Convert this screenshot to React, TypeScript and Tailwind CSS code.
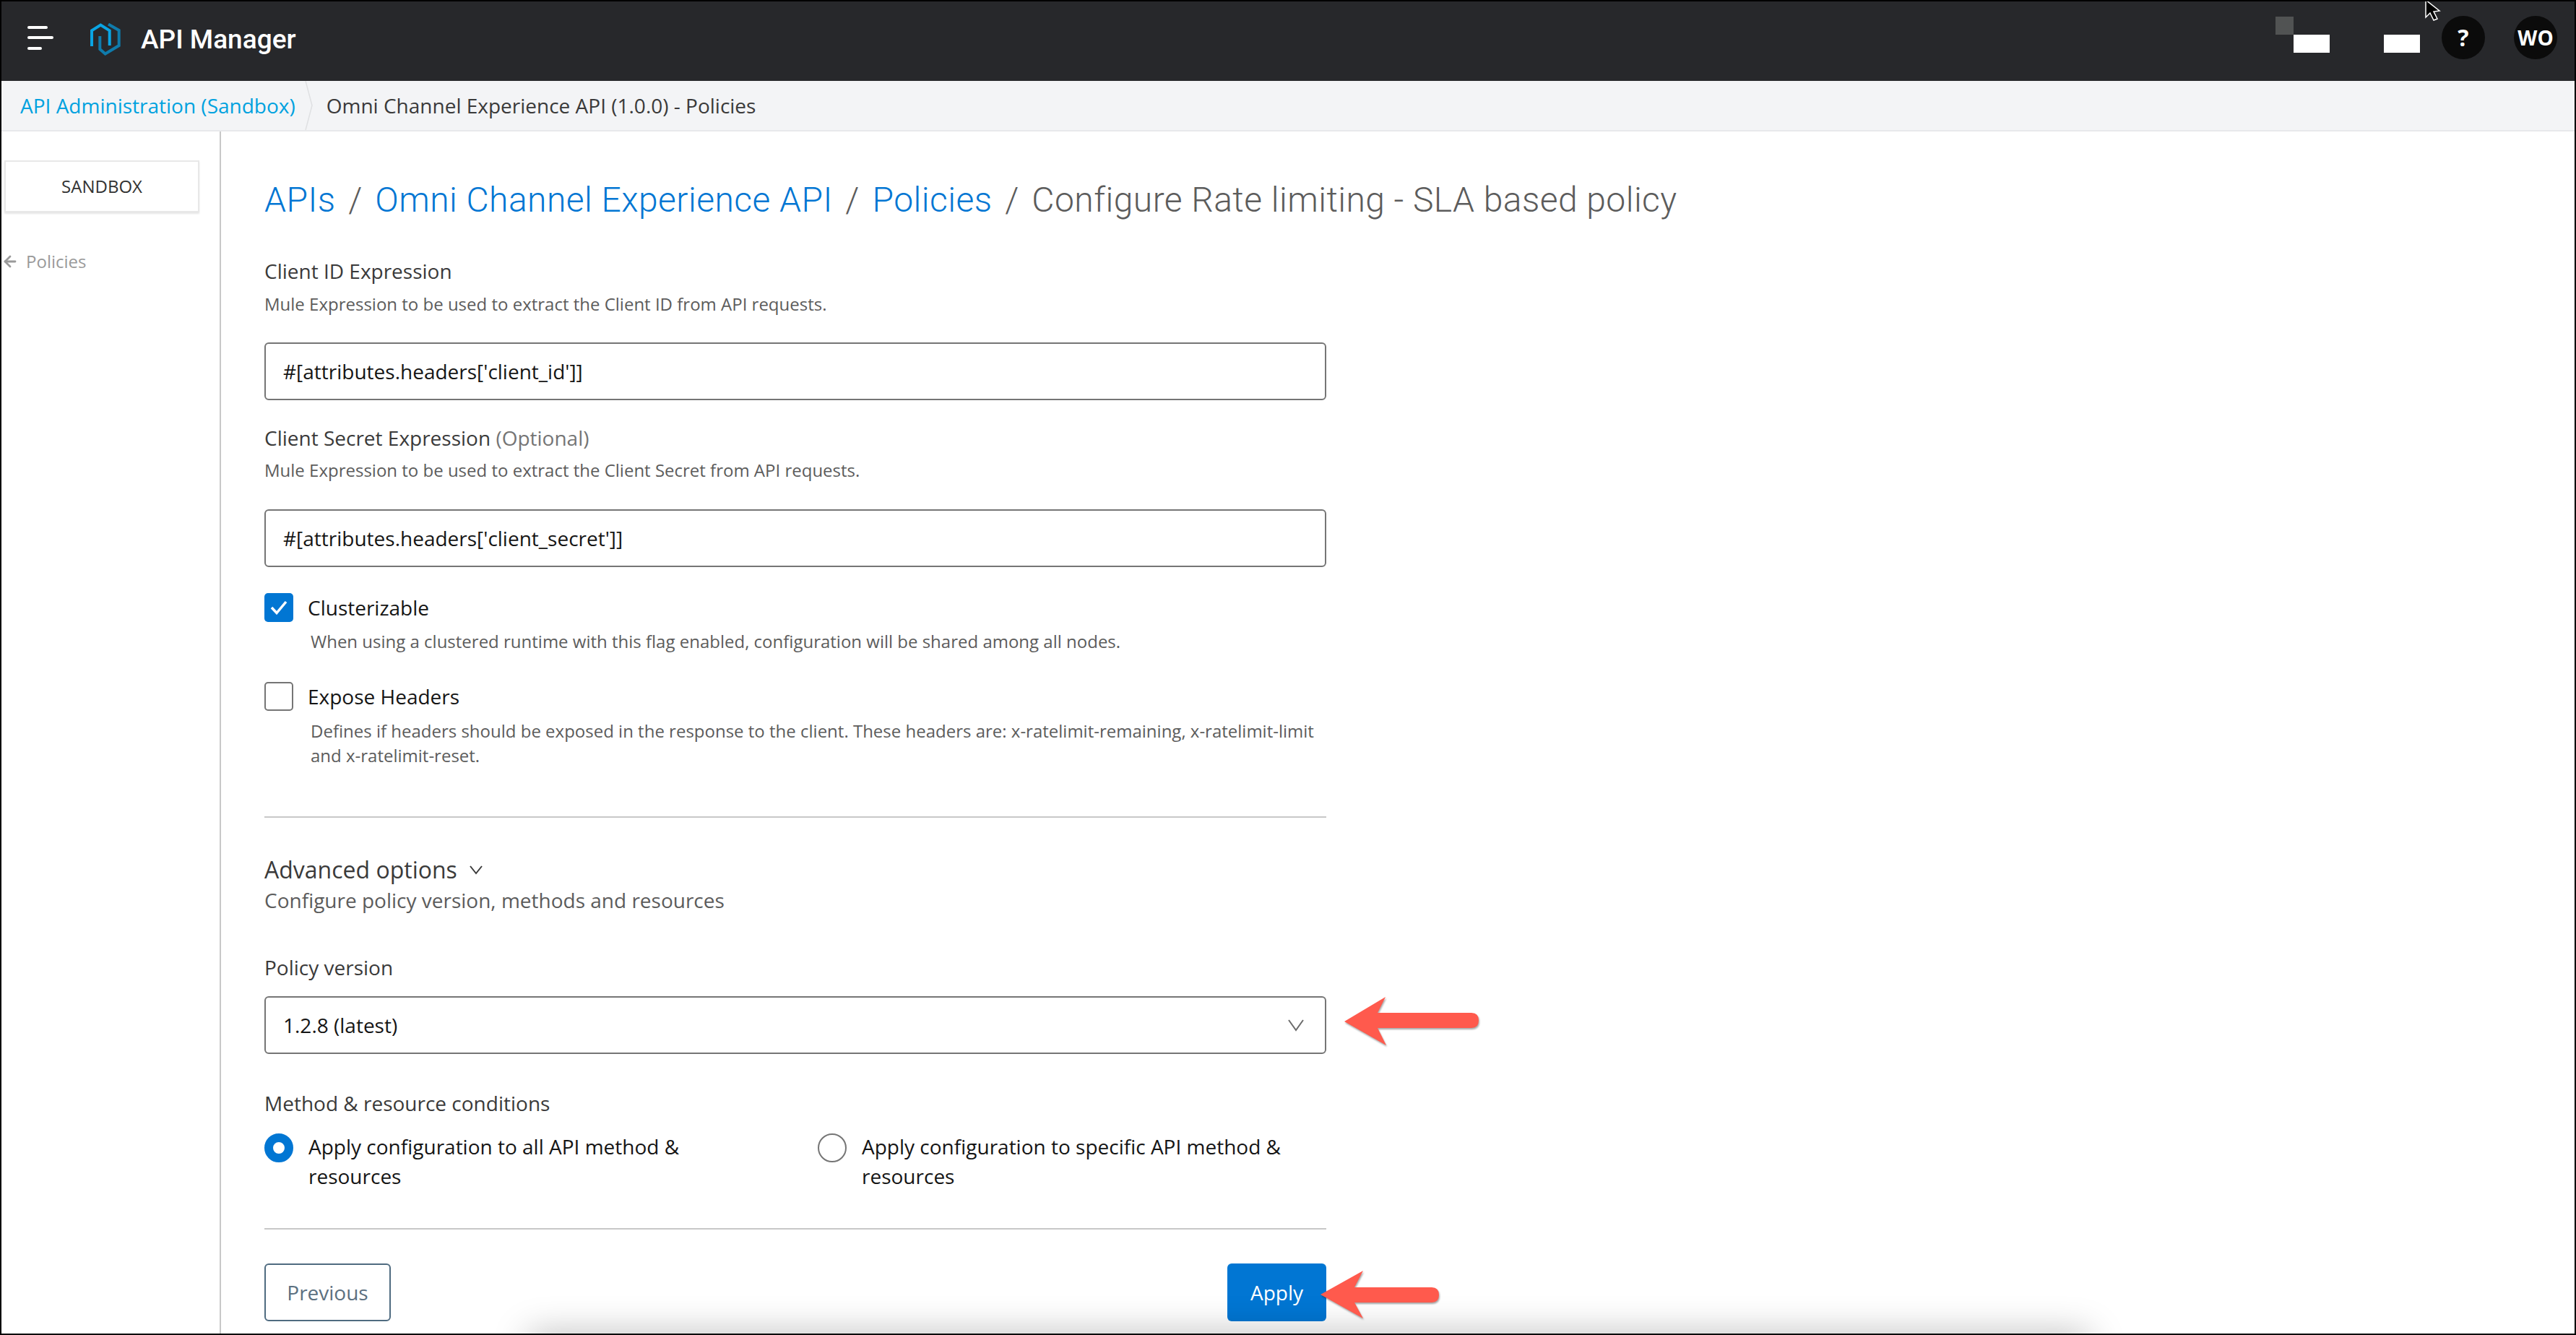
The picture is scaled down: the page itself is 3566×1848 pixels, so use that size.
import React from "react";
import { ArrowLeft } from "lucide-react";

function Logo() {
  return (
    <svg width="42" height="46" viewBox="0 0 42 46" fill="none">
      <polyline points="2,32 2,10.4 14.3,2.5 26.7,10.4 26.7,31" stroke="#0aa5e4" strokeWidth="4" />
      <polyline points="13.3,18 13.3,36 20.7,42.5 39.7,31 39.7,10 25,1.5" stroke="#0f7bab" strokeWidth="4" />
    </svg>
  );
}

function RedArrow({ className, w, h, head }: { className: string; w: number; h: number; head: string }) {
  return (
    <svg className={className} width={w} height={h} viewBox={`0 0 ${w} ${h}`}>
      <path d={head} fill="#ff5a4d" />
    </svg>
  );
}

function Radio({ checked, text, className }: { checked?: boolean; text: string; className: string }) {
  return (
    <div className={`flex gap-[21px] ${className}`}>
      <div
        className={
          checked
            ? "mt-[2px] h-[40px] w-[40px] shrink-0 rounded-full border-[12px] border-[#0176d3] bg-white"
            : "mt-[2px] h-[40px] w-[40px] shrink-0 rounded-full border-2 border-[#757575] bg-white"
        }
      />
      <div className="text-[28px] leading-[41px] text-[#151515]">{text}</div>
    </div>
  );
}

export default function App() {
  return (
    <div
      className="relative flex h-[1848px] w-[3566px] flex-col overflow-hidden border-2 border-black bg-white"
      style={{ fontFamily: '"Open Sans", sans-serif' }}
    >
      <header className="flex h-[110px] shrink-0 items-center bg-[#27282b] pb-[5px] pl-[36px]">
        <div className="mb-[5px] flex w-[36px] flex-col gap-[10.5px]">
          <div className="h-[4px] w-[28px] rounded-full bg-white" />
          <div className="h-[4px] w-[36px] rounded-full bg-white" />
          <div className="h-[4px] w-[20px] rounded-full bg-white" />
        </div>
        <div className="ml-[51px]">
          <Logo />
        </div>
        <div
          className="ml-[28px] text-[37px] font-medium leading-[50px] text-white"
          style={{ fontFamily: "Roboto, sans-serif" }}
        >
          API Manager
        </div>
        <div className="mb-[5px] ml-auto flex items-center pr-[24px]">
          <div className="mb-[8px] flex flex-col">
            <div className="h-[25px] w-[25px] bg-[#515353]" />
            <div className="ml-[25px] h-[25px] w-[50px] bg-white" />
          </div>
          <div className="mb-[8px] ml-[75px] mt-[25px] h-[25px] w-[50px] bg-white" />
          <div className="ml-[30px] flex h-[60px] w-[60px] items-center justify-center rounded-full bg-[#0b0b0b] text-[32px] font-bold text-white">
            ?
          </div>
          <div className="ml-[40px] flex h-[60px] w-[60px] items-center justify-center rounded-full bg-[#0b0b0b] text-[28px] font-bold text-white">
            WO
          </div>
        </div>
      </header>

      <div className="flex h-[70px] shrink-0 items-center border-b-2 border-[#e8e9eb] bg-[#f3f4f6] pl-[26px]">
        <span className="text-[28px] text-[#00a2df]">API Administration (Sandbox)</span>
        <svg className="ml-[13px]" width="11" height="68" viewBox="0 0 11 68" fill="none">
          <polyline points="1,0 10,34 1,68" stroke="#dfe0e2" strokeWidth="1.5" />
        </svg>
        <span className="ml-[19px] text-[28px] text-[#3a3a3a]">Omni Channel Experience API (1.0.0) - Policies</span>
      </div>

      <div className="flex min-h-0 flex-1">
        <aside className="w-[304px] shrink-0 border-r-2 border-[#c8c8c8]">
          <div className="ml-[4px] mt-[40px] flex h-[72px] w-[270px] items-center justify-center border-2 border-[#e8e8e8] text-[24px] text-[#333333] shadow-[0_2px_2px_rgba(0,0,0,0.1)]">
            SANDBOX
          </div>
          <div className="mt-[52px] flex items-center pl-0 text-[24px] leading-[32px] text-[#9a9a9a]">
            <ArrowLeft size={24} strokeWidth={2.8} color="#9a9a9a" />
            <span className="ml-[10px]">Policies</span>
          </div>
        </aside>

        <main className="pl-[60px]">
          <h1
            className="mt-[65px] whitespace-nowrap text-[48px] font-light leading-[60px] tracking-[0.45px] text-[#5c5c5c]"
            style={{ fontFamily: "Roboto, sans-serif" }}
          >
            <span className="text-[#0176d3]">APIs</span>
            <span className="mx-[5.5px]"> / </span>
            <span className="text-[#0176d3]">Omni Channel Experience API</span>
            <span className="mx-[5.5px]"> / </span>
            <span className="text-[#0176d3]">Policies</span>
            <span className="mx-[5.5px]"> / </span>
            <span>Configure Rate limiting - SLA based policy</span>
          </h1>

          <div className="w-[1470px]">
            <div className="mt-[48px] text-[28px] leading-[40px] text-[#3a3a3a]">Client ID Expression</div>
            <div className="mt-[10px] text-[24px] leading-[32px] text-[#5c5c5c]">
              Mule Expression to be used to extract the Client ID from API requests.
            </div>
            <div className="mt-[37px] flex h-[80px] items-center rounded-[6px] border-2 border-[#757575] pl-[24px] text-[28px] text-[#151515]">
              #[attributes.headers['client_id']]
            </div>

            <div className="mt-[32px] text-[28px] leading-[40px] text-[#3a3a3a]">
              Client Secret Expression <span className="text-[#757575]">(Optional)</span>
            </div>
            <div className="mt-[9px] text-[24px] leading-[32px] text-[#5c5c5c]">
              Mule Expression to be used to extract the Client Secret from API requests.
            </div>
            <div className="mt-[38px] flex h-[80px] items-center rounded-[6px] border-2 border-[#757575] pl-[24px] text-[28px] text-[#151515]">
              #[attributes.headers['client_secret']]
            </div>

            <div className="mt-[36px] flex h-[40px] items-center">
              <div className="flex h-[40px] w-[40px] items-center justify-center rounded-[5px] bg-[#0176d3]">
                <svg width="24" height="20" viewBox="0 0 24 20" fill="none">
                  <polyline points="2,10 9,17.5 22,2" stroke="#ffffff" strokeWidth="3.5" />
                </svg>
              </div>
              <span className="ml-[20px] text-[28px] text-[#151515]">Clusterizable</span>
            </div>
            <div className="ml-[64px] mt-[11px] text-[24px] leading-[32px] text-[#5c5c5c]">
              When using a clustered runtime with this flag enabled, configuration will be shared among all nodes.
            </div>

            <div className="mt-[40px] flex h-[40px] items-center">
              <div className="h-[40px] w-[40px] rounded-[5px] border-2 border-[#757575]" />
              <span className="ml-[20px] text-[28px] text-[#151515]">Expose Headers</span>
            </div>
            <div className="ml-[64px] mt-[11px] text-[24px] leading-[34px] text-[#5c5c5c]">
              Defines if headers should be exposed in the response to the client. These headers are: x-ratelimit-remaining, x-ratelimit-limit and x-ratelimit-reset.
            </div>

            <div className="mt-[67px] h-[2px] bg-[#c8c8c8]" />

            <div className="mt-[52px] flex items-center text-[32px] leading-[40px] text-[#3a3a3a]">
              Advanced options
              <svg className="ml-[16px]" width="20" height="16" viewBox="0 0 20 16" fill="none">
                <polyline points="2,3 10,13 18,3" stroke="#3a3a3a" strokeWidth="2" />
              </svg>
            </div>
            <div className="mt-[6px] text-[28px] leading-[32px] text-[#5c5c5c]">Configure policy version, methods and resources</div>

            <div className="mt-[57px] text-[28px] leading-[40px] text-[#3a3a3a]">Policy version</div>
            <div className="mt-[20px] flex h-[80px] items-center justify-between rounded-[6px] border-2 border-[#757575] pl-[24px] pr-[28px] text-[28px] text-[#151515]">
              1.2.8 (latest)
              <svg width="24" height="18" viewBox="0 0 24 18" fill="none">
                <polyline points="2,2 12,16 22,2" stroke="#6b6b6b" strokeWidth="2" />
              </svg>
            </div>

            <div className="mt-[48px] text-[28px] leading-[40px] text-[#3a3a3a]">Method &amp; resource conditions</div>
            <div className="mt-[20px] flex">
              <Radio checked text="Apply configuration to all API method & resources" className="h-[84px] w-[766px] pr-[120px]" />
              <Radio text="Apply configuration to specific API method & resources" className="h-[84px] w-[704px]" />
            </div>

            <div className="mt-[49px] h-[2px] bg-[#c8c8c8]" />

            <div className="mt-[47px] flex items-center justify-between">
              <div className="flex h-[80px] w-[175px] items-center justify-center rounded-[6px] border-2 border-[#4f6b80] text-[28px] text-[#5c7080]">
                Previous
              </div>
              <div className="flex h-[80px] w-[137px] items-center justify-center rounded-[6px] bg-[#0176d3] text-[28px] text-white">
                Apply
              </div>
            </div>
          </div>
        </main>
      </div>

      <div className="pointer-events-none absolute bottom-[-40px] left-[730px] h-[40px] w-[2160px] bg-white shadow-[0_0_50px_rgba(0,0,0,0.28)]" />

      <RedArrow
        className="absolute left-[1857px] top-[1376px] drop-shadow-[1px_2px_1px_rgba(0,0,0,0.35)]"
        w={190}
        h={70}
        head="M2 36 L59 2 L48 24 L178 24 Q188 24 188 34.5 Q188 45 178 45 L48 45 L60 69 Z"
      />
      <RedArrow
        className="absolute left-[1824px] top-[1755px] drop-shadow-[1px_2px_1px_rgba(0,0,0,0.35)]"
        w={168}
        h={68}
        head="M2 35 L61 2 L49 25 L156 25 Q166 25 166 35.5 Q166 46 156 46 L49 46 L61 68 Z"
      />

      <svg className="absolute left-[3354px] top-[-2px]" width="26" height="30" viewBox="0 0 26 30">
        <path d="M2 0 L2 24 L8 18 L13 28 L18 26 L13 16 L21 15 Z" fill="#000000" stroke="#ffffff" strokeWidth="1.5" />
      </svg>
    </div>
  );
}
